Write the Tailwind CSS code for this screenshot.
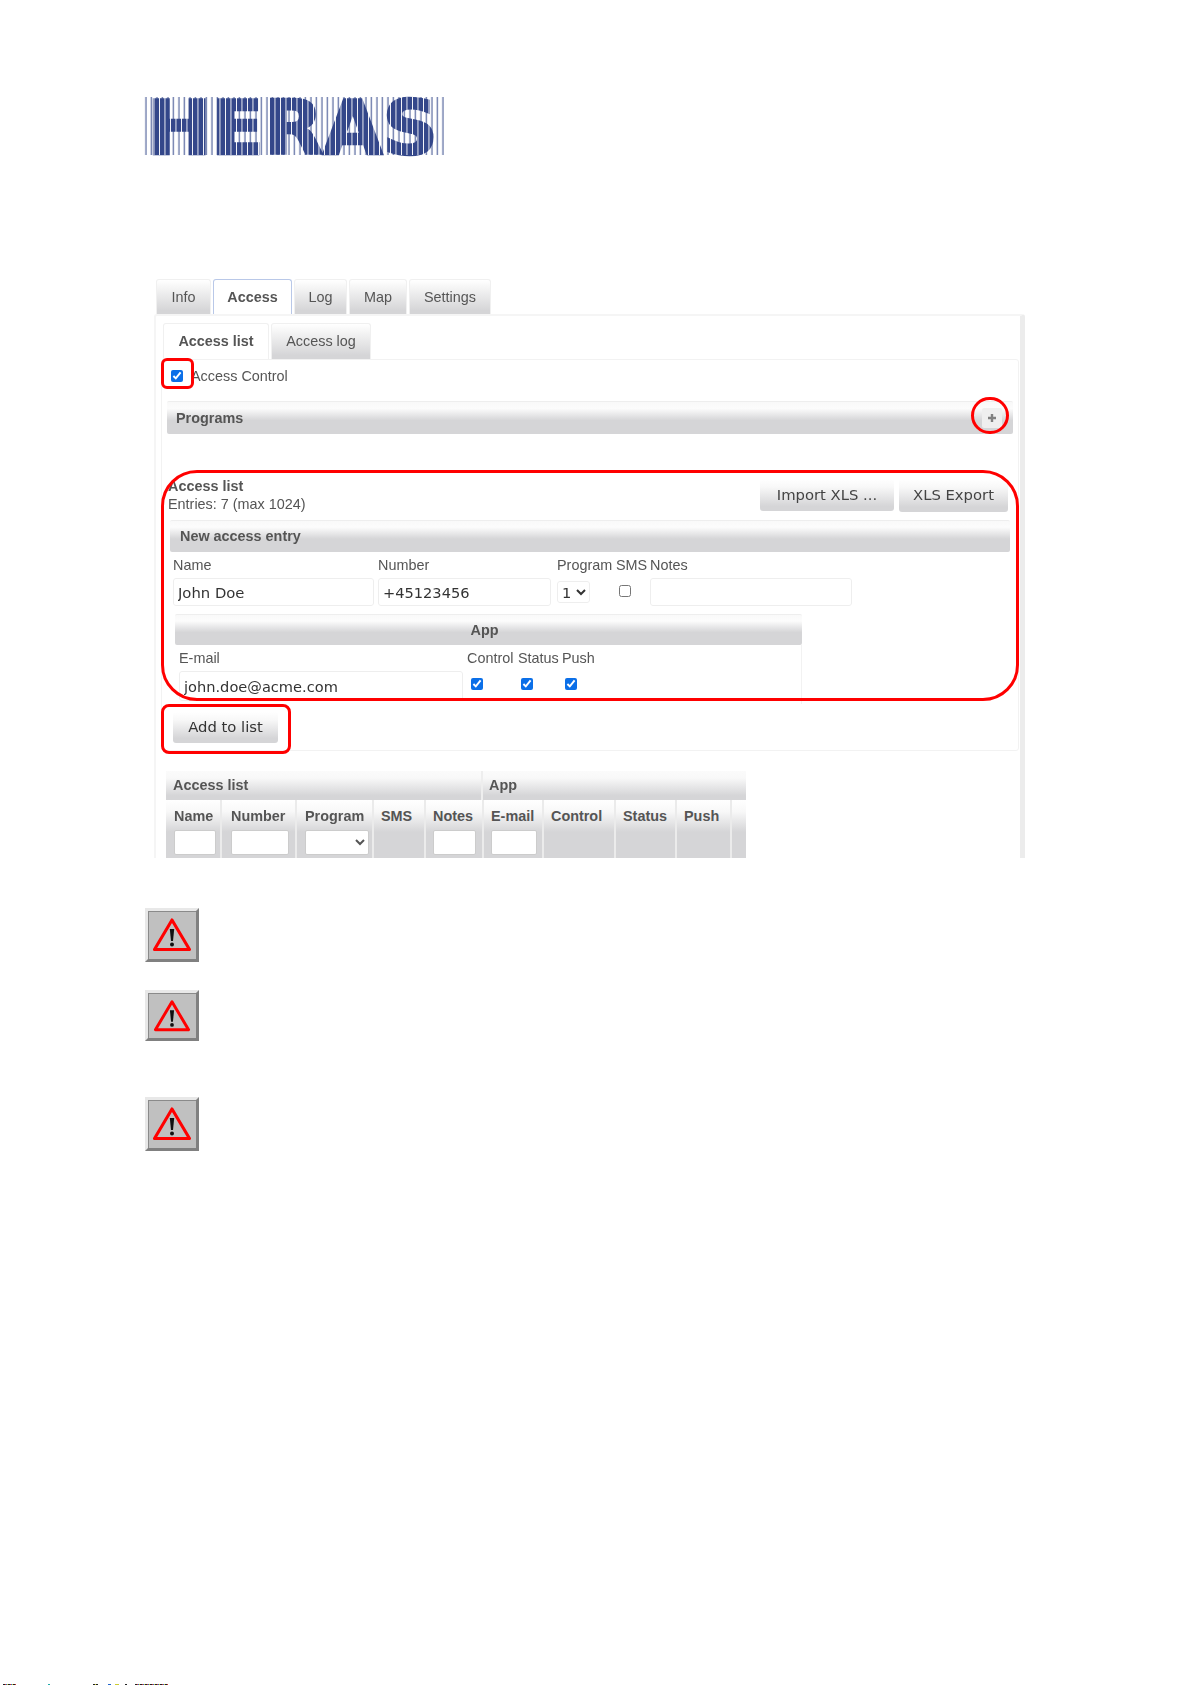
<!DOCTYPE html>
<html lang="en">
<head>
  <meta charset="UTF-8">
  <title>Access list</title>
  <script src="https://cdn.jsdelivr.net/npm/@tailwindcss/browser@4"></script>
</head>
<body class="bg-white font-['Liberation_Sans',sans-serif]">
<div class="relative w-[1193px] h-[1685px] overflow-hidden bg-white">

  <!-- Logo -->
  <div class="pt-[97px] pl-[137px]">
    <svg width="310" height="58" viewBox="0 0 310 58" class="block overflow-visible font-['DejaVu_Sans',sans-serif]">
      <defs>
        <pattern id="thin" x="6" width="5.5" height="58" patternUnits="userSpaceOnUse"><rect x="2.4" width="1" height="58" fill="#34478a"/></pattern>
        <pattern id="slit" width="5.5" height="58" patternUnits="userSpaceOnUse"><rect x="0" width="0.9" height="58" fill="#fff"/></pattern>
      </defs>
      <rect x="6" width="304" height="58" fill="url(#thin)"/>
      <text x="10" y="56.6" font-size="75" font-weight="700" textLength="291" lengthAdjust="spacingAndGlyphs" fill="#34478a" stroke="#34478a" stroke-width="2.4">HERAS</text>
      <rect width="310" height="58" fill="url(#slit)"/>
    </svg>
  </div>

  <!-- Screenshot of the web interface -->
  <div class="mt-[124px] ml-[154px] w-[871px] h-[579px] overflow-hidden blur-[0.7px] text-[#555] text-[14.4px] leading-none">
    <!-- Main tabs -->
    <div class="flex gap-[2px] pl-[2px] h-[35px] font-normal">
      <div class="w-[55px] rounded-t-[3px] flex items-center justify-center bg-[linear-gradient(#fff_0%,#f6f6f6_20%,#d5d5d7_90%)] border-x border-t border-[#f0f0f0]">Info</div>
      <div class="w-[79px] rounded-t-[3px] flex items-center justify-center bg-white border-x border-t border-[#b9c8e8] font-bold">Access</div>
      <div class="w-[53px] rounded-t-[3px] flex items-center justify-center bg-[linear-gradient(#fff_0%,#f6f6f6_20%,#d5d5d7_90%)] border-x border-t border-[#f0f0f0]">Log</div>
      <div class="w-[58px] rounded-t-[3px] flex items-center justify-center bg-[linear-gradient(#fff_0%,#f6f6f6_20%,#d5d5d7_90%)] border-x border-t border-[#f0f0f0]">Map</div>
      <div class="w-[82px] rounded-t-[3px] flex items-center justify-center bg-[linear-gradient(#fff_0%,#f6f6f6_20%,#d5d5d7_90%)] border-x border-t border-[#f0f0f0]">Settings</div>
    </div>

    <!-- Outer panel -->
    <div class="h-[544px] w-[871px] border-t-2 border-l-2 border-r-[5px] border-l-[#f5f5f5] border-r-[#ececec] border-t-[#f5f5f5] rounded-t-[3px] pl-[5px] pr-[1px] pt-[7px]">
      <!-- Sub tabs -->
      <div class="flex gap-[2px] pl-[2px] h-[36px]">
        <div class="w-[106px] flex items-center justify-center bg-white border-x border-t border-[#f0f0f0] rounded-t-[3px] font-bold">Access list</div>
        <div class="w-[100px] flex items-center justify-center bg-[linear-gradient(#fff_0%,#f6f6f6_20%,#d5d5d7_90%)] border-x border-t border-[#f0f0f0] rounded-t-[3px]">Access log</div>
      </div>

      <!-- Inner panel -->
      <div class="border border-[#f2f2f2] rounded-[3px] h-[392px] px-[5px] relative">
        <label class="flex items-center h-[32px] pl-[4px] gap-[8px]">
          <input type="checkbox" checked class="w-[12px] h-[12px] m-0 accent-[#0b6fe8]">
          <span>Access Control</span>
        </label>

        <!-- Programs -->
        <div class="mt-[9px] h-[33px] flex items-center justify-between pl-[9px] pr-[11px] rounded-[2px] font-bold border-t border-[#eee] bg-[linear-gradient(#f9f9f9_0%,#fcfcfc_20%,#d5d5d7_58%,#d5d5d7_100%)]">
          <span>Programs</span>
          <span class="w-[20px] h-[20px] rounded-[2px] bg-[#efefef] flex items-center justify-center">
            <svg width="10" height="10" viewBox="0 0 10 10"><path d="M5 1v8M1 5h8" stroke="#808080" stroke-width="2.4"/></svg>
          </span>
        </div>

        <!-- Access list header -->
        <div class="mt-[44px] flex justify-between pr-[5px]">
          <div class="pl-[1px] pt-[1px]">
            <div class="font-bold h-[18px]">Access list</div>
            <div class="h-[16px]">Entries: 7 (max 1024)</div>
          </div>
          <div class="mt-[1px] flex gap-[5px] font-['DejaVu_Sans',sans-serif] text-[14.8px] text-[#444]">
            <div class="w-[134px] h-[32px] flex items-center justify-center rounded-[3px] bg-[linear-gradient(#fff_0%,#f8f8f8_25%,#d5d5d7_85%)]">Import XLS ...</div>
            <div class="w-[109px] h-[33px] flex items-center justify-center rounded-[3px] bg-[linear-gradient(#fff_0%,#f8f8f8_25%,#d5d5d7_85%)]">XLS Export</div>
          </div>
        </div>

        <!-- New access entry -->
        <div class="mt-[7px] ml-[3px] mr-[3px] h-[32px] flex items-center pl-[10px] rounded-[2px] font-bold border-t border-[#eee] bg-[linear-gradient(#f9f9f9_0%,#fcfcfc_20%,#d5d5d7_58%,#d5d5d7_100%)]">New access entry</div>

        <div class="flex ml-[6px] mt-[3px] gap-[4px]">
          <div class="w-[201px]">
            <div class="h-[20px] mb-[3px] flex items-center">Name</div>
            <input value="John Doe" class="w-[201px] h-[28px] px-[4px] border border-[#eee] rounded-[3px] font-['DejaVu_Sans',sans-serif] text-[14.8px] text-[#333]">
          </div>
          <div class="w-[173px]">
            <div class="h-[20px] mb-[3px] flex items-center">Number</div>
            <input value="+45123456" class="w-[173px] h-[28px] px-[4px] border border-[#eee] rounded-[3px] font-['DejaVu_Sans',sans-serif] text-[14.6px] text-[#333]">
          </div>
          <div class="ml-[2px] w-[55px]">
            <div class="h-[20px] mb-[3px] flex items-center">Program</div>
            <select class="mt-[3px] w-[33px] h-[22px] border border-[#eee] rounded-[3px] font-['DejaVu_Sans',sans-serif] text-[14.6px] text-[#333]"><option>1</option></select>
          </div>
          <div class="w-[30px]">
            <div class="h-[20px] mb-[3px] flex items-center">SMS</div>
            <input type="checkbox" class="mt-[7px] ml-[3px] w-[12px] h-[12px]">
          </div>
          <div>
            <div class="h-[20px] mb-[3px] flex items-center">Notes</div>
            <input class="w-[202px] h-[28px] border border-[#eee] rounded-[3px]">
          </div>
        </div>

        <!-- App -->
        <div class="ml-[8px] w-[627px] mt-[8px]">
          <div class="h-[31px] flex items-center justify-center pr-[8px] rounded-[2px] font-bold border-t border-[#eee] bg-[linear-gradient(#f9f9f9_0%,#fcfcfc_20%,#d5d5d7_58%,#d5d5d7_100%)]">App</div>
          <div class="flex h-[59px] overflow-hidden border-r border-[#f2f2f2] pl-[4px]">
            <div class="w-[288px]">
              <div class="h-[26px] flex items-center">E-mail</div>
              <input value="john.doe@acme.com" class="w-[284px] h-[30px] px-[4px] border border-[#eee] rounded-[3px] font-['DejaVu_Sans',sans-serif] text-[14.6px] text-[#333]">
            </div>
            <div class="flex gap-[3px]">
              <div class="w-[48px]"><div class="h-[26px] flex items-center">Control</div><input type="checkbox" checked class="mt-[7px] ml-[4px] w-[12px] h-[12px] accent-[#0b6fe8]"></div>
              <div class="w-[41px]"><div class="h-[26px] flex items-center">Status</div><input type="checkbox" checked class="mt-[7px] ml-[3px] w-[12px] h-[12px] accent-[#0b6fe8]"></div>
              <div class="w-[32px]"><div class="h-[26px] flex items-center">Push</div><input type="checkbox" checked class="mt-[7px] ml-[3px] w-[12px] h-[12px] accent-[#0b6fe8]"></div>
            </div>
          </div>
        </div>

        <div class="ml-[6px] mt-[8px] w-[105px] h-[31px] flex items-center justify-center rounded-[3px] font-['DejaVu_Sans',sans-serif] text-[14.8px] text-[#333] bg-[linear-gradient(#fff_0%,#f8f8f8_25%,#d5d5d7_85%)]">Add to list</div>
      </div>

      <!-- Access list table -->
      <div class="ml-[5px] mt-[20px] w-[580px] font-bold">
        <div class="flex h-[29px] bg-[linear-gradient(#fbfbfb_0%,#f8f8f8_25%,#d5d5d7_85%)]">
          <div class="w-[317px] pl-[7px] flex items-center border-r-2 border-[#eee]">Access list</div>
          <div class="pl-[6px] flex items-center">App</div>
        </div>
        <div class="flex h-[58px]">
          <div class="w-[56px] pl-[8px] pt-[9px] border-r-2 border-[#ebebeb] bg-[linear-gradient(#fff_0%,#f8f8f8_20%,#d5d5d7_55%)]">Name<input class="block mt-[7px] w-[42px] h-[25px] bg-white border border-[#ccc] rounded-[2px]"></div>
          <div class="w-[75px] pl-[9px] pt-[9px] border-r-2 border-[#ebebeb] bg-[linear-gradient(#fff_0%,#f8f8f8_20%,#d5d5d7_55%)]">Number<input class="block mt-[7px] w-[58px] h-[25px] bg-white border border-[#ccc] rounded-[2px]"></div>
          <div class="w-[77px] pl-[8px] pt-[9px] border-r-2 border-[#ebebeb] bg-[linear-gradient(#fff_0%,#f8f8f8_20%,#d5d5d7_55%)]">Program<select class="block mt-[7px] w-[64px] h-[25px] bg-white border border-[#ccc] rounded-[2px]"></select></div>
          <div class="w-[52px] pl-[7px] pt-[9px] border-r-2 border-[#ebebeb] bg-[linear-gradient(#fff_0%,#f8f8f8_20%,#d5d5d7_55%)]">SMS</div>
          <div class="w-[58px] pl-[7px] pt-[9px] border-r-2 border-[#ebebeb] bg-[linear-gradient(#fff_0%,#f8f8f8_20%,#d5d5d7_55%)]">Notes<input class="block mt-[7px] w-[43px] h-[25px] bg-white border border-[#ccc] rounded-[2px]"></div>
          <div class="w-[60px] pl-[7px] pt-[9px] border-r-2 border-[#ebebeb] bg-[linear-gradient(#fff_0%,#f8f8f8_20%,#d5d5d7_55%)]">E-mail<input class="block mt-[7px] w-[46px] h-[25px] bg-white border border-[#ccc] rounded-[2px]"></div>
          <div class="w-[72px] pl-[7px] pt-[9px] border-r-2 border-[#ebebeb] bg-[linear-gradient(#fff_0%,#f8f8f8_20%,#d5d5d7_55%)]">Control</div>
          <div class="w-[61px] pl-[7px] pt-[9px] border-r-2 border-[#ebebeb] bg-[linear-gradient(#fff_0%,#f8f8f8_20%,#d5d5d7_55%)]">Status</div>
          <div class="w-[55px] pl-[7px] pt-[9px] border-r-2 border-[#ebebeb] bg-[linear-gradient(#fff_0%,#f8f8f8_20%,#d5d5d7_55%)]">Push</div>
          <div class="w-[14px] bg-[linear-gradient(#fff_0%,#f8f8f8_20%,#d5d5d7_55%)]"></div>
        </div>
      </div>
    </div>
  </div>

  <!-- Red annotations over the screenshot -->
  <div class="absolute left-[161px] top-[358px] w-[33px] h-[31px] border-[3px] border-[#f00] rounded-[6px]"></div>
  <div class="absolute left-[971px] top-[397px] w-[38px] h-[37px] border-[3px] border-[#f00] rounded-full"></div>
  <div class="absolute left-[161px] top-[470px] w-[858px] h-[231px] border-[3px] border-[#f00] rounded-[36px]"></div>
  <div class="absolute left-[161px] top-[704px] w-[130px] h-[50px] border-[3px] border-[#f00] rounded-[8px]"></div>

  <!-- Warning symbols -->
  <div class="absolute left-[145px] top-[908px] w-[54px] h-[54px] bg-[#c0c0c0] border-[3px] border-t-[#e8e8e8] border-l-[#e8e8e8] border-r-[#808080] border-b-[#808080] shadow-[inset_1px_1px_0_#8a8a8a] flex items-center justify-center">
    <svg width="42" height="38" viewBox="0 0 42 38"><path d="M21 4 38.5 33.5H3.5Z" fill="none" stroke="#f00" stroke-width="3.1" stroke-linejoin="round"/><path d="M18.8 13h4.4l-1.2 12h-2Z" fill="#111"/><circle cx="21" cy="28.4" r="2" fill="#111"/></svg>
  </div>
  <div class="absolute left-[145px] top-[990px] w-[54px] h-[51px] bg-[#c0c0c0] border-[3px] border-t-[#e8e8e8] border-l-[#e8e8e8] border-r-[#808080] border-b-[#808080] shadow-[inset_1px_1px_0_#8a8a8a] flex items-center justify-center">
    <svg width="42" height="36" viewBox="0 0 42 38"><path d="M21 4 38.5 33.5H3.5Z" fill="none" stroke="#f00" stroke-width="3.1" stroke-linejoin="round"/><path d="M18.8 13h4.4l-1.2 12h-2Z" fill="#111"/><circle cx="21" cy="28.4" r="2" fill="#111"/></svg>
  </div>
  <div class="absolute left-[145px] top-[1097px] w-[54px] h-[54px] bg-[#c0c0c0] border-[3px] border-t-[#e8e8e8] border-l-[#e8e8e8] border-r-[#808080] border-b-[#808080] shadow-[inset_1px_1px_0_#8a8a8a] flex items-center justify-center">
    <svg width="42" height="38" viewBox="0 0 42 38"><path d="M21 4 38.5 33.5H3.5Z" fill="none" stroke="#f00" stroke-width="3.1" stroke-linejoin="round"/><path d="M18.8 13h4.4l-1.2 12h-2Z" fill="#111"/><circle cx="21" cy="28.4" r="2" fill="#111"/></svg>
  </div>

  <!-- Tops of a footer line showing at the very bottom edge -->
  <div class="absolute left-[3px] top-[1684px] h-[1px] w-[165px] flex">
    <span class="w-[13px] bg-[repeating-linear-gradient(90deg,#222_0_2px,#c33_2px_3px,#26c_3px_4px,#cc3_4px_5px)]"></span>
    <span class="ml-[32px] w-[2px] bg-[#2aa]"></span>
    <span class="ml-[43px] w-[5px] bg-[repeating-linear-gradient(90deg,#222_0_2px,#cc3_2px_3px)]"></span>
    <span class="ml-[10px] w-[3px] bg-[#26c]"></span>
    <span class="ml-[4px] w-[4px] bg-[#cc3]"></span>
    <span class="ml-[6px] w-[2px] bg-[#222]"></span>
    <span class="ml-[8px] w-[33px] bg-[repeating-linear-gradient(90deg,#222_0_2px,#c33_2px_3px,#26c_3px_4px,#cc3_4px_5px)]"></span>
  </div>
</div>
</body>
</html>
